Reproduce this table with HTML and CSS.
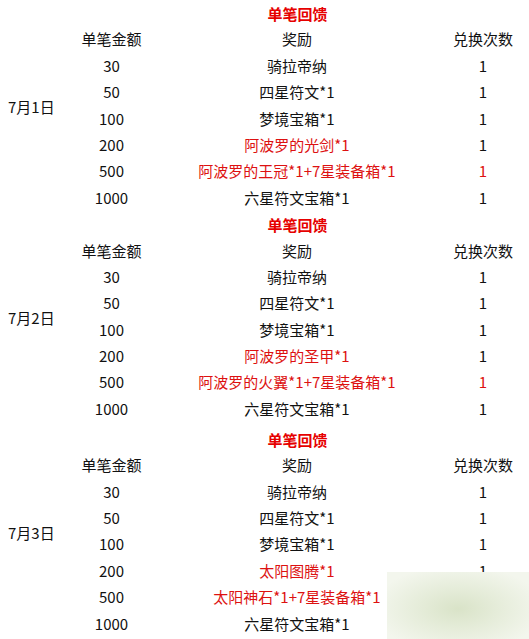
FILE: index.html
```html
<!DOCTYPE html>
<html lang="zh-CN">
<head>
<meta charset="utf-8">
<link rel="stylesheet" href="styles.css">
</head>
<body>
<div class="page">
  <div class="block">
    <div class="date">7月1日</div>
    <div class="title">单笔回馈</div>
    <div class="c amt">单笔金额</div><div class="c rew">奖励</div><div class="c cnt">兑换次数</div>
    <div class="c amt">30</div><div class="c rew">骑拉帝纳</div><div class="c cnt">1</div>
    <div class="c amt">50</div><div class="c rew">四星符文*1</div><div class="c cnt">1</div>
    <div class="c amt">100</div><div class="c rew">梦境宝箱*1</div><div class="c cnt">1</div>
    <div class="c amt">200</div><div class="c rew red">阿波罗的光剑*1</div><div class="c cnt">1</div>
    <div class="c amt">500</div><div class="c rew red">阿波罗的王冠*1+7星装备箱*1</div><div class="c cnt red">1</div>
    <div class="c amt">1000</div><div class="c rew">六星符文宝箱*1</div><div class="c cnt">1</div>
  </div>
  <div class="block">
    <div class="date">7月2日</div>
    <div class="title">单笔回馈</div>
    <div class="c amt">单笔金额</div><div class="c rew">奖励</div><div class="c cnt">兑换次数</div>
    <div class="c amt">30</div><div class="c rew">骑拉帝纳</div><div class="c cnt">1</div>
    <div class="c amt">50</div><div class="c rew">四星符文*1</div><div class="c cnt">1</div>
    <div class="c amt">100</div><div class="c rew">梦境宝箱*1</div><div class="c cnt">1</div>
    <div class="c amt">200</div><div class="c rew red">阿波罗的圣甲*1</div><div class="c cnt">1</div>
    <div class="c amt">500</div><div class="c rew red">阿波罗的火翼*1+7星装备箱*1</div><div class="c cnt red">1</div>
    <div class="c amt">1000</div><div class="c rew">六星符文宝箱*1</div><div class="c cnt">1</div>
  </div>
  <div class="block last">
    <div class="date">7月3日</div>
    <div class="title">单笔回馈</div>
    <div class="c amt">单笔金额</div><div class="c rew">奖励</div><div class="c cnt">兑换次数</div>
    <div class="c amt">30</div><div class="c rew">骑拉帝纳</div><div class="c cnt">1</div>
    <div class="c amt">50</div><div class="c rew">四星符文*1</div><div class="c cnt">1</div>
    <div class="c amt">100</div><div class="c rew">梦境宝箱*1</div><div class="c cnt">1</div>
    <div class="c amt">200</div><div class="c rew red">太阳图腾*1</div><div class="c cnt">1</div>
    <div class="c amt">500</div><div class="c rew red">太阳神石*1+7星装备箱*1</div><div class="c cnt">1</div>
    <div class="c amt">1000</div><div class="c rew">六星符文宝箱*1</div><div class="c cnt">1</div>
  </div>
  <div class="watermark"></div>
</div>
</body>
</html>
```

FILE: styles.css
```css
html, body {
  margin: 0;
  padding: 0;
  background: #ffffff;
}
body {
  font-family: "Noto Sans CJK SC", "Liberation Sans", sans-serif;
  font-size: 15px;
  color: #111;
}
.page {
  position: relative;
  width: 529px;
  height: 639px;
  overflow: hidden;
}
.block {
  display: grid;
  grid-template-columns: 68px 87px 284px 88px;
  grid-template-rows: repeat(8, 26.4px);
  align-items: center;
}
.block.last {
  margin-top: 3.6px;
}
.date {
  grid-column: 1;
  grid-row: 1 / span 8;
  padding-left: 8px;
  padding-top: 2px;
  white-space: nowrap;
}
.title {
  grid-column: 2 / span 3;
  text-align: center;
  font-weight: bold;
  color: #e60000;
}
.c {
  text-align: center;
  white-space: nowrap;
  line-height: 26.4px;
}
.amt { grid-column: 2; }
.rew { grid-column: 3; }
.cnt { grid-column: 4; }
.red { color: #dd1111; }
.watermark {
  position: absolute;
  left: 387px;
  top: 572px;
  width: 142px;
  height: 67px;
  background: radial-gradient(ellipse 60% 65% at 50% 55%, #d9e3c8 0%, #e5ecd9 45%, #f3f6ed 100%);
}
```
